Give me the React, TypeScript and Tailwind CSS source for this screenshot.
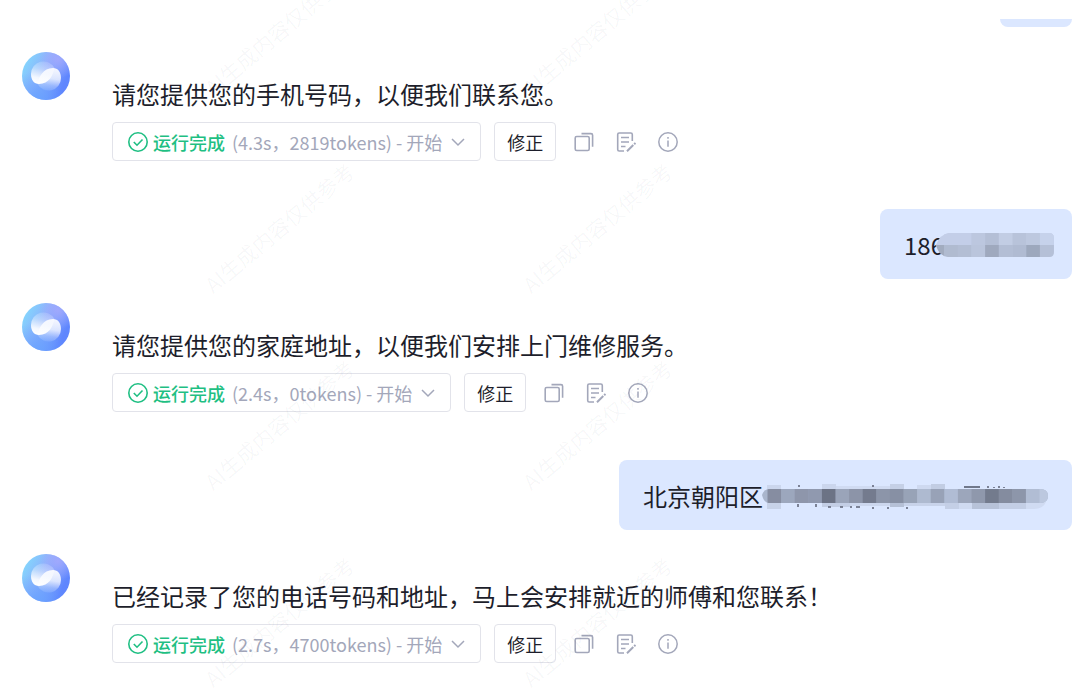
import React from "react";

type Reply = {
  text: string;
  time: string;
  tokens: string;
};

const replies: Reply[] = [
  { text: "请您提供您的手机号码，以便我们联系您。", time: "4.3s", tokens: "2819" },
  { text: "请您提供您的家庭地址，以便我们安排上门维修服务。", time: "2.4s", tokens: "0" },
  { text: "已经记录了您的电话号码和地址，马上会安排就近的师傅和您联系！", time: "2.7s", tokens: "4700" },
];

const phoneMosaic = [
  ["#c3cee8", "#c3cee8", "#bcc7df", "#b4bfd6", "#c2cde4", "#b8c3da", "#bdc8df", "#c6d2eb"],
  ["#b0bbd0", "#b3bed4", "#bac5dc", "#9fa9be", "#b3bed5", "#b0bbd2", "#9da8bd", "#b5c0d7"],
];

const addressMosaic = [
  "#868da1", "#9ca7bd", "#8e96ab", "#9099af", "#6c7385", "#9aa4b9", "#8c94a8",
  "#747b8e", "#8c95a9", "#8790a4", "#98a3b7", "#aebad0", "#98a2b7", "#b0bcd4",
  "#9ca6bb", "#8f98ac", "#737b8d", "#848c9f", "#8d96aa", "#b1bdd4", "#bcc8df",
];

const addressShade = [
  { x: 5, y: 1, w: 14, h: 4, fill: "#cbd6ed" },
  { x: 60, y: 0, w: 14, h: 5, fill: "#cbd6ed" },
  { x: 74, y: 2, w: 54, h: 3, fill: "#d0dbf2" },
  { x: 128, y: 0, w: 14, h: 5, fill: "#c5d0e6" },
  { x: 155, y: 1, w: 14, h: 4, fill: "#ced9f0" },
  { x: 169, y: 0, w: 14, h: 5, fill: "#c2cde3" },
  { x: 5, y: 18, w: 14, h: 7, fill: "#c7d2e8" },
  { x: 60, y: 18, w: 28, h: 5, fill: "#c3cee5" },
  { x: 88, y: 18, w: 40, h: 4, fill: "#ccd7ee" },
  { x: 128, y: 18, w: 14, h: 5, fill: "#b5c0d6" },
  { x: 142, y: 18, w: 41, h: 4, fill: "#c8d3ea" },
  { x: 183, y: 18, w: 14, h: 7, fill: "#c4cfe6" },
  { x: 197, y: 18, w: 13, h: 7, fill: "#cfdaf1" },
  { x: 210, y: 18, w: 27, h: 7, fill: "#b7c2d8" },
  { x: 237, y: 18, w: 27, h: 7, fill: "#c3cee5" },
];

const Avatar = () => (
  <svg viewBox="0 0 48 48" className="size-12 shrink-0" aria-hidden="true">
    <defs>
      <linearGradient id="disc" x1="0.05" y1="0.15" x2="0.9" y2="0.6">
        <stop offset="0" stopColor="#83d8fd" />
        <stop offset="0.45" stopColor="#8cb2fc" />
        <stop offset="1" stopColor="#5f86fe" />
      </linearGradient>
      <radialGradient id="glow" cx="0.75" cy="0.15" r="0.4">
        <stop offset="0" stopColor="#a4a9fd" stopOpacity="0.9" />
        <stop offset="1" stopColor="#a4a9fd" stopOpacity="0" />
      </radialGradient>
      <radialGradient id="bottom" cx="0.3" cy="1" r="0.6">
        <stop offset="0" stopColor="#68a4ff" stopOpacity="0.9" />
        <stop offset="1" stopColor="#68a4ff" stopOpacity="0" />
      </radialGradient>
      <linearGradient id="leafA" x1="0.6" y1="0" x2="0.4" y2="1">
        <stop offset="0" stopColor="#fff" stopOpacity="0.15" />
        <stop offset="0.35" stopColor="#fff" stopOpacity="0.4" />
        <stop offset="0.75" stopColor="#fff" stopOpacity="0.9" />
        <stop offset="1" stopColor="#fff" />
      </linearGradient>
      <linearGradient id="leafB" x1="0.6" y1="0" x2="0.4" y2="1">
        <stop offset="0" stopColor="#fff" stopOpacity="0.9" />
        <stop offset="0.45" stopColor="#fff" stopOpacity="0.75" />
        <stop offset="0.75" stopColor="#fff" stopOpacity="0.3" />
        <stop offset="1" stopColor="#fff" stopOpacity="0.1" />
      </linearGradient>
    </defs>
    <circle cx="24" cy="24" r="24" fill="url(#disc)" />
    <circle cx="24" cy="24" r="24" fill="url(#glow)" />
    <circle cx="24" cy="24" r="24" fill="url(#bottom)" />
    <path d="M9 22A12.500 12.500 0 0 1 32.500 16C31 23 27 32 17 32C12 32 9 28 9 22Z" fill="url(#leafA)" />
    <path d="M39 26A12.500 12.500 0 0 1 15.500 32C17 25 21 16 31 16C36 16 39 20 39 26Z" fill="url(#leafB)" />
  </svg>
);

const CheckIcon = () => (
  <svg viewBox="0 0 20 20" className="size-5 shrink-0" fill="none" stroke="#1fbf83" strokeWidth="1.600" aria-hidden="true">
    <circle cx="10" cy="10" r="9.200" />
    <path d="m5.800 10 3.200 3.200 5.500-5.700" />
  </svg>
);

const CopyIcon = () => (
  <svg viewBox="0 0 20 20" className="size-5" fill="none" stroke="#a3a7ba" strokeWidth="1.600" aria-hidden="true">
    <rect x="1.200" y="4.500" width="14" height="14" rx="1.500" />
    <path d="M7.500 1.600H17a1.600 1.600 0 0 1 1.600 1.600v11.600" />
  </svg>
);

const NoteIcon = () => (
  <svg viewBox="0 0 20 20" className="size-5" fill="none" stroke="#a3a7ba" strokeWidth="1.600" aria-hidden="true">
    <path d="M8 19H3.200a1.500 1.500 0 0 1-1.500-1.500v-15A1.500 1.500 0 0 1 3.200 1h11.600a1.500 1.500 0 0 1 1.500 1.500V9" />
    <path d="M5 5.500h8M5 10h8M5 14.500h4.500" />
    <path d="m11 19.200 6.300-6.200M18.200 12.200l1.300-1.300" strokeWidth="2" />
  </svg>
);

const InfoIcon = () => (
  <svg viewBox="0 0 20 20" className="size-5" fill="none" stroke="#a3a7ba" strokeWidth="1.500" aria-hidden="true">
    <circle cx="10" cy="10" r="9.200" />
    <path d="M10 8.500v6.200M10 5v1.800" />
  </svg>
);

const BotMessage = ({ text, time, tokens }: Reply) => (
  <div className="flex items-start gap-[42px] pl-[22px]">
    <Avatar />
    <div className="min-w-0 flex-1 pt-6">
      <p className="text-[24px] leading-9 text-[#1d1e2b]">{text}</p>
      <div className="mt-[10px] flex items-center">
        <button type="button" className="flex h-[39px] items-center rounded border border-[#e2e3ea] px-[15px] text-[18px] leading-6">
          <CheckIcon />
          <span className="ml-[5px] font-medium text-[#1fbf83]">运行完成</span>
          <span className="ml-[7px] text-[#a3a7ba]">
            ({time}，{tokens}tokens) - 开始
          </span>
          <svg viewBox="0 0 14 14" className="ml-[9px] size-[14px]" fill="none" stroke="#a3a7ba" strokeWidth="1.500" aria-hidden="true">
            <path d="m1 4 6 6 6-6" />
          </svg>
        </button>
        <button type="button" className="ml-[13px] h-[39px] rounded border border-[#e2e3ea] px-3 text-[18px] leading-6 text-[#1d1e2b]">
          修正
        </button>
        <div className="ml-[18px] flex items-center gap-[22px]">
          <button type="button" aria-label="复制"><CopyIcon /></button>
          <button type="button" aria-label="编辑"><NoteIcon /></button>
          <button type="button" aria-label="详情"><InfoIcon /></button>
        </div>
      </div>
    </div>
  </div>
);

const UserMessage = ({ children }: { children: React.ReactNode }) => (
  <div className="mt-12 mb-6 flex justify-end pr-2">
    <div className="flex h-[70px] items-center rounded-lg bg-[#dbe7ff] px-6 pt-0.5 text-[24px] leading-9 text-[#1d1e2b]">
      {children}
    </div>
  </div>
);

const PhoneMask = () => (
  <svg viewBox="0 0 118 24" className="-ml-2 mr-[-6px] h-6 w-[118px]" aria-hidden="true">
    <clipPath id="phone">
      <path d="M0 12Q4 1 13 0h100q5 0 5 5v14q0 5-5 5H12Q3 23 0 12Z" />
    </clipPath>
    <g clipPath="url(#phone)">
      <rect width="118" height="24" fill="#c3cee8" />
      <rect y="12" width="9" height="12" fill="#a2acbf" />
      {phoneMosaic.map((row, r) =>
        row.map((fill, c) => (
          <rect key={`${r}-${c}`} x={8 + c * 13.7} y={r * 12} width="14" height="12" fill={fill} />
        ))
      )}
    </g>
  </svg>
);

const AddressMask = () => (
  <svg viewBox="0 0 286 26" className="-ml-px mt-0.5 h-[26px] w-[286px]" aria-hidden="true">
    <clipPath id="address">
      <path d="M0 11Q2 5 7 5h271q8 0 8 7t-8 7H7q-5 0-7-8Z" />
    </clipPath>
    {addressShade.map((s) => (
      <rect key={`${s.x}-${s.y}`} x={s.x} y={s.y} width={s.w} height={s.h} fill={s.fill} />
    ))}
    <path d="M264 18h20q-3 7-12 7h-8Z" fill="#d0dbf2" />
    <g clipPath="url(#address)">
      <rect width="286" height="26" fill="#a9b5cc" />
      {addressMosaic.map((fill, i) => (
        <rect key={i} x={5.5 + i * 13.6} y="5" width="14" height="14" fill={fill} />
      ))}
    </g>
    <path d="M202 3h16" stroke="#4d5365" strokeWidth="1.500" />
    <path d="M226 2v2M232 3v1M237 2v2M242 3v1M37 1v2M111 1v2" stroke="#5d6375" strokeWidth="1.500" />
    <path d="M36 20v3M54 20v3M66 23h3M78 23h3M88 23h2M94 23h4M111 23v2M126 23v2M145 23v2" stroke="#5d6375" strokeWidth="1.500" />
  </svg>
);

const Watermark = () => (
  <div aria-hidden="true" className="pointer-events-none absolute inset-0 overflow-hidden select-none">
    <div className="-mt-[68px] ml-[120px] grid w-[636px] grid-cols-2">
      {Array.from({ length: 8 }, (_, i) => (
        <div key={i} className="flex h-[197px] items-center justify-center">
          <span className="-rotate-40 text-[21px] whitespace-nowrap text-[#1d2b4b]/4">AI生成内容仅供参考</span>
        </div>
      ))}
    </div>
  </div>
);

const App = () => {
  return (
    <main className="relative min-h-screen overflow-hidden bg-white pt-[19px] font-['Noto_Sans_CJK_SC',sans-serif]">
      <div className="mb-[25px] flex justify-end pr-2">
        <div className="h-2 w-[72px] rounded-b-lg bg-[#dbe7ff]" />
      </div>
      <BotMessage {...replies[0]} />
      <UserMessage>
        <span>186</span>
        <PhoneMask />
      </UserMessage>
      <BotMessage {...replies[1]} />
      <UserMessage>
        <span>北京朝阳区</span>
        <AddressMask />
      </UserMessage>
      <BotMessage {...replies[2]} />
      <Watermark />
    </main>
  );
};

export default App;
